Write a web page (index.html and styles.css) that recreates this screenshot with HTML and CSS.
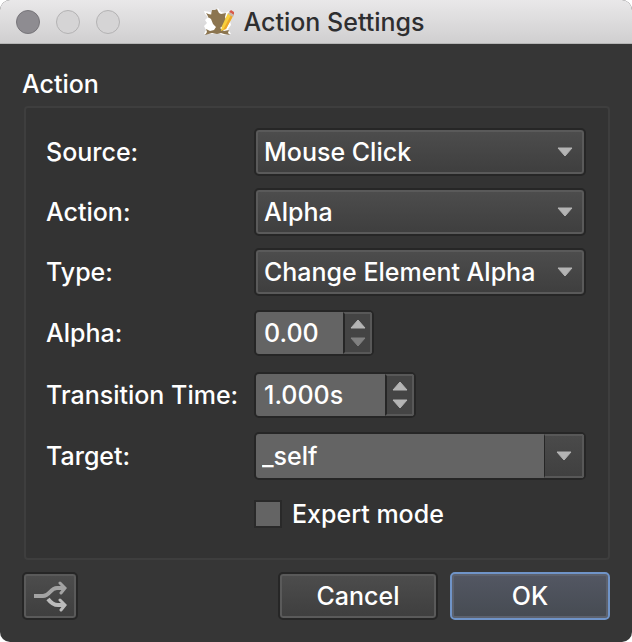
FILE: index.html
```html
<!DOCTYPE html>
<html lang="en">
<head>
  <meta charset="UTF-8">
  <meta name="viewport" content="width=device-width, initial-scale=1.0">
  <title>Action Settings</title>
  <link rel="stylesheet" href="styles.css">
</head>
<body>
  <div class="window">
    <!-- Title bar -->
    <header class="title-bar">
      <div class="window-buttons">
        <button type="button" class="dot dot-close" aria-label="Close"></button>
        <button type="button" class="dot" aria-label="Minimize" disabled></button>
        <button type="button" class="dot" aria-label="Zoom" disabled></button>
      </div>
      <div class="title">
        <svg class="app-icon" width="32" height="28" viewBox="0 0 32 28" aria-hidden="true">
          <path d="M1 3l6 1 4 3 1-4 3-3 3 4 4 1 4-2 0 6 2 8-3 4 3 5-8 1-5-2-5 1-9 0 2-4-2-4 3-3-2-3 3-3-3-3z" fill="#fff"/>
          <path d="M14 1l2 4 2 1 5-1-1 4 1 3-2 5-4 3 4 3 5-1-1 3 2 2-6-1-3-1-4 1-5-1-7 2 2-3-1-3 4 2 4-1 2-3-3-3-2-5-3-2 2-3 1 1 1-5 3 0z" fill="#8c7550"/>
          <path d="M3 5l5 2-2 3z" fill="#8c7550"/>
          <path d="M25 5l5 3-7 13-5 2 1-5z" fill="#f8cf3c"/>
          <path d="M28 7l2 1-7 13-3 1z" fill="#eba72a"/>
          <path d="M26 4l2-2 3 2 0 3z" fill="#d8594a"/>
          <path d="M25 6l1-2 5 3-1 2z" fill="#c9b8a8"/>
        </svg>
        <h1>Action Settings</h1>
      </div>
    </header>

    <form class="content">
      <h2 id="group-title">Action</h2>
      <div class="group" role="group" aria-labelledby="group-title">
        <label for="source">Source:</label>
        <select id="source" class="dropdown">
          <option>Mouse Click</option>
        </select>

        <label for="action">Action:</label>
        <select id="action" class="dropdown">
          <option>Alpha</option>
        </select>

        <label for="type">Type:</label>
        <select id="type" class="dropdown">
          <option>Change Element Alpha</option>
        </select>

        <label for="alpha">Alpha:</label>
        <div class="spin-row">
          <div class="field spin">
            <input type="text" id="alpha" class="input-alpha" value="0.00">
            <div class="steps">
              <button type="button" class="step" aria-label="Increase alpha">
                <svg width="16" height="10" viewBox="0 0 16 10"><path d="M1 9L8 1l7 8z"/></svg>
              </button>
              <button type="button" class="step" aria-label="Decrease alpha" disabled>
                <svg width="16" height="10" viewBox="0 0 16 10"><path d="M1 1l7 8 7-8z"/></svg>
              </button>
            </div>
          </div>
        </div>

        <label for="time">Transition Time:</label>
        <div class="spin-row">
          <div class="field spin">
            <input type="text" id="time" class="input-time" value="1.000s">
            <div class="steps">
              <button type="button" class="step" aria-label="Increase time">
                <svg width="16" height="10" viewBox="0 0 16 10"><path d="M1 9L8 1l7 8z"/></svg>
              </button>
              <button type="button" class="step" aria-label="Decrease time">
                <svg width="16" height="10" viewBox="0 0 16 10"><path d="M1 1l7 8 7-8z"/></svg>
              </button>
            </div>
          </div>
        </div>

        <label for="target">Target:</label>
        <div class="field combo">
          <input type="text" id="target" value="_self">
          <button type="button" class="combo-button" aria-label="Show targets">
            <svg width="16" height="10" viewBox="0 0 16 10"><path d="M1 1l7 8 7-8z"/></svg>
          </button>
        </div>

        <div class="check-row">
          <input type="checkbox" id="expert">
          <label for="expert">Expert mode</label>
        </div>
      </div>

      <!-- Bottom buttons -->
      <div class="actions">
        <button type="button" class="btn btn-icon" aria-label="Connections">
          <svg width="34" height="32" viewBox="0 0 34 32" fill="none" stroke-width="4">
            <path d="M1 16h9c7 0 7-8 14-8h7" stroke="#a3a3a3"/>
            <path d="M27 3l5 5-4 5" stroke="#a3a3a3" stroke-width="3" stroke-linecap="round"/>
            <path d="M15 19c3 4 6 6 10 6h6" stroke="#bcbcbc"/>
            <path d="M27 20l5 5-4 5" stroke="#bcbcbc" stroke-width="3" stroke-linecap="round"/>
          </svg>
        </button>
        <button type="button" class="btn btn-cancel">Cancel</button>
        <button type="submit" class="btn btn-ok">OK</button>
      </div>
    </form>
  </div>
</body>
</html>
```
FILE: styles.css
```css
* {
  margin: 0;
  padding: 0;
  box-sizing: border-box;
}

body {
  background: #fff;
  color: #fff;
  font-family: Inter, "Liberation Sans", sans-serif;
  font-size: 25px;
  font-weight: 500;
  line-height: 32px;
}

input,
select,
button {
  font: inherit;
  color: inherit;
}

.window {
  min-height: 100vh;
  background: #363636;
  border-radius: 10px;
  overflow: hidden;
}

/* Title bar */
.title-bar {
  display: grid;
  grid-template-columns: 1fr auto 1fr;
  align-items: center;
  height: 44px;
  padding: 0 16px;
  background: linear-gradient(#e9e8e9, #d0cfd0);
  border-bottom: 1px solid #b5b5b5;
}

.window-buttons {
  display: flex;
  gap: 16px;
}

.dot {
  width: 24px;
  height: 24px;
  border: 1px solid #b3b2b3;
  border-radius: 50%;
  background: #d5d4d5;
}

.dot-close {
  background: #8e8c91;
  border-color: #77757a;
}

.title {
  display: flex;
  align-items: center;
  gap: 8px;
  padding-right: 4px;
  color: #2e2e30;
}

h1,
h2 {
  font-size: 25px;
  font-weight: 500;
}

/* Dialog content */
.content {
  padding: 24px 22px 22px;
}

.group {
  display: grid;
  grid-template-columns: 208px 1fr;
  row-gap: 12px;
  align-items: center;
  margin: 6px 0 12px 2px;
  padding: 20px 22px 22px 20px;
  background: #333;
  border: 2px solid #3e3e3e;
  border-radius: 4px;
}

.dropdown,
.btn {
  height: 48px;
  border: 2px solid #262626;
  border-radius: 5px;
  background: linear-gradient(#4d4d4d, #3e3e3e);
  box-shadow: inset 0 0 0 2px #5a5a5a;
}

.dropdown {
  appearance: none;
  width: 100%;
  padding: 0 40px 0 8px;
  background: url("data:image/svg+xml,%3Csvg xmlns='http://www.w3.org/2000/svg' width='16' height='10'%3E%3Cpath d='M1 1l7 8 7-8z' fill='%23b4b4b4' stroke='%23b4b4b4' stroke-linejoin='round'/%3E%3C/svg%3E") no-repeat right 11px center, linear-gradient(#4d4d4d, #3e3e3e);
}

/* Text fields with buttons on the right */
.field {
  display: flex;
  border: 2px solid #262626;
  border-radius: 5px;
  background: #646464;
  overflow: hidden;
}

.field input {
  min-width: 0;
  padding: 0 8px;
  border: none;
  background: none;
  outline: none;
}

.field svg,
.step svg {
  display: block;
  fill: #b4b4b4;
  stroke: #b4b4b4;
  stroke-linejoin: round;
}

.spin-row {
  display: flex;
  padding: 2px 0;
}

.spin {
  height: 46px;
}

.input-alpha {
  width: 87px;
}

.input-time {
  width: 129px;
}

.steps {
  display: flex;
  flex-direction: column;
  justify-content: center;
  gap: 8px;
  width: 29px;
  border: 2px solid #585858;
  border-left: 2px solid #262626;
  background: #444;
}

.step {
  display: flex;
  justify-content: center;
  border: none;
  background: none;
}

.step:disabled svg {
  fill: #808080;
  stroke: #808080;
}

.combo {
  height: 48px;
}

.field #target {
  flex: 1;
  padding: 0 6px;
}

.combo-button {
  display: flex;
  align-items: center;
  justify-content: center;
  width: 40px;
  border: 2px solid #585858;
  border-left: 1px solid #262626;
  background: linear-gradient(#4a4a4a, #404040);
}

.check-row {
  grid-column: 2;
  display: flex;
  align-items: center;
  gap: 10px;
  height: 44px;
}

.check-row input {
  appearance: none;
  width: 28px;
  height: 28px;
  border: 2px solid #292929;
  background: #646464;
}

/* Bottom buttons */
.actions {
  display: flex;
  gap: 12px;
}

.btn {
  width: 160px;
}

.btn-icon {
  display: flex;
  align-items: center;
  justify-content: center;
  width: 56px;
  margin-right: auto;
}

.btn-ok {
  border-color: #7094c8;
  background: linear-gradient(#535763, #464b52);
  box-shadow: inset 0 0 0 2px #5d626e;
}
```
